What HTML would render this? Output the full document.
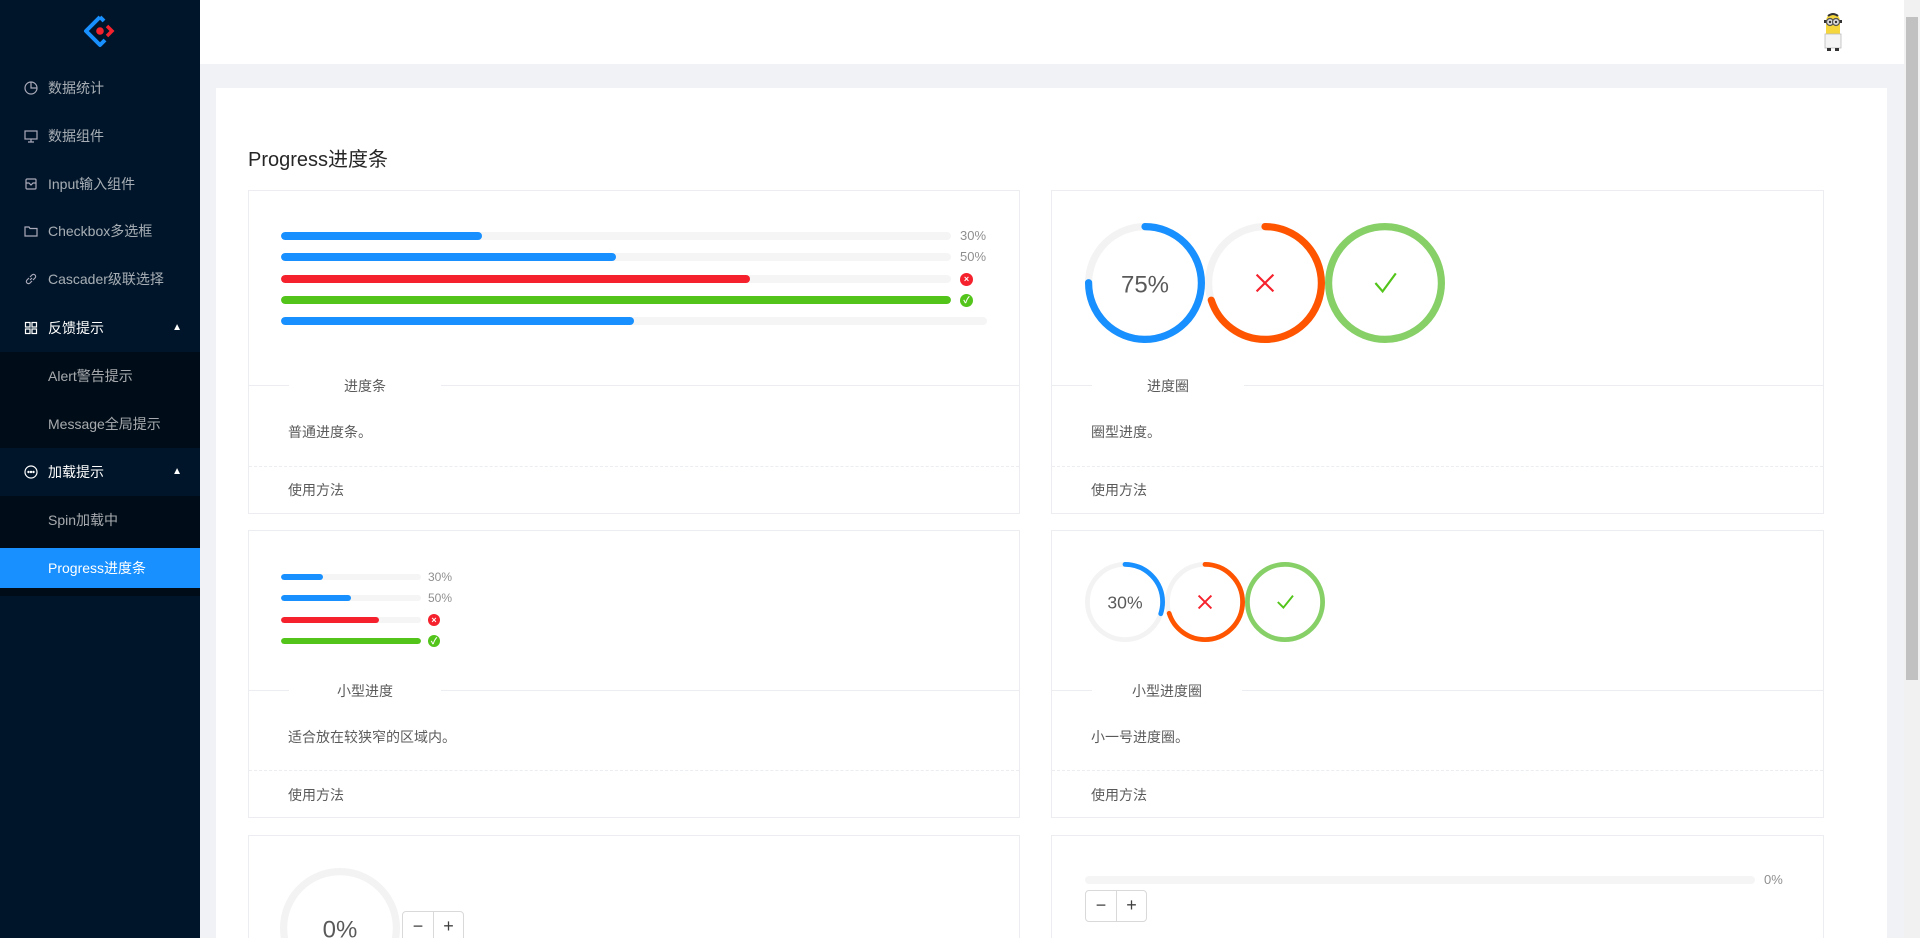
<!DOCTYPE html>
<html><head><meta charset="utf-8"><style>
*{margin:0;padding:0;box-sizing:border-box}
html{width:1920px;height:938px;overflow:hidden}
body{width:1920px;height:938px;overflow:hidden;background:#f0f2f5;font-family:"Liberation Sans","Noto Sans CJK SC",sans-serif;font-size:14px;color:rgba(0,0,0,.65);position:relative}
.side{position:absolute;left:0;top:0;width:200px;height:938px;background:#001529}
.mi{position:absolute;left:0;width:200px;height:48px;line-height:48px;color:rgba(255,255,255,.65);font-size:14px;padding-left:48px}
.mi svg{position:absolute;left:24px;top:17px}
.sub{background:#000c17}
.open{color:#fff}
.sel{background:#1890ff;color:#fff}
.arr{position:absolute;right:18px;top:0;font-size:10px;color:#fff}
.hdr{position:absolute;left:200px;top:0;width:1704px;height:64px;background:#fff}
.sb{position:absolute;right:0;top:0;width:16px;height:938px;background:#f1f1f1}
.sb div{position:absolute;left:2px;top:17px;width:12px;height:663px;background:#c1c1c1}
.panel{position:absolute;left:216px;top:88px;width:1671px;height:850px;background:#fff}
.title{position:absolute;left:248px;top:143px;font-size:20px;color:rgba(0,0,0,.85)}
.card{position:absolute;border:1px solid #ebedf0;background:#fff}
.div{position:absolute;left:0;right:0;height:1px;background:#ebedf0}
.dlab{position:absolute;background:#fff;padding:0 55px;font-size:14px;color:rgba(0,0,0,.65);line-height:20px;font-weight:normal}
.dash{position:absolute;left:0;right:0;border-top:1px dashed #ebedf0}
.desc{position:absolute;left:39px;font-size:14px;color:rgba(0,0,0,.65)}
.bar{position:absolute;height:8px;border-radius:100px;background:#f5f5f5;overflow:hidden}
.bar i{position:absolute;left:0;top:0;height:100%;border-radius:100px}
.pt{position:absolute;font-size:13px;color:rgba(0,0,0,.45);line-height:16px}
.ic{position:absolute;border-radius:50%;color:#fff;font-size:9px;text-align:center;font-weight:bold}
.btns{position:absolute;display:flex;border:1px solid #d9d9d9;border-radius:4px;background:#fff}
.btns span{width:30px;height:30px;line-height:28px;text-align:center;font-size:18px;color:rgba(0,0,0,.75)}
.btns span+span{border-left:1px solid #d9d9d9}
</style></head><body>
<div class="side">
 <svg style="position:absolute;left:82px;top:14px" width="36" height="36" viewBox="0 0 36 36"><path d="M18 3 L4 17 L18 31 L23 26" fill="none" stroke="#1890ff" stroke-width="4" stroke-linejoin="round"/><path d="M18 3 L22 7" stroke="#1890ff" stroke-width="4"/><path d="M25 12 L30 17 L25 22" fill="none" stroke="#f5222d" stroke-width="3.5"/><circle cx="18" cy="17" r="3.8" fill="#f5222d"/></svg>
 <div class="mi" style="top:64px"><svg width="14" height="14" viewBox="0 0 14 14" fill="none" stroke="#aab" stroke-width="1.2"><circle cx="7" cy="7" r="6"/><path d="M7 1v6h6"/></svg>数据统计</div>
 <div class="mi" style="top:112px"><svg width="14" height="14" viewBox="0 0 14 14" fill="none" stroke="#aab" stroke-width="1.2"><rect x="1" y="2" width="12" height="8"/><path d="M7 10v3M4 13h6"/></svg>数据组件</div>
 <div class="mi" style="top:160px"><svg width="14" height="14" viewBox="0 0 14 14" fill="none" stroke="#aab" stroke-width="1.2"><rect x="2" y="2" width="10" height="10" rx="1"/><path d="M2 6h3l2 2 2-2h3"/></svg>Input输入组件</div>
 <div class="mi" style="top:207px"><svg width="14" height="14" viewBox="0 0 14 14" fill="none" stroke="#aab" stroke-width="1.2"><path d="M1 3h4l1 1.5h7V12H1z"/></svg>Checkbox多选框</div>
 <div class="mi" style="top:255px"><svg width="14" height="14" viewBox="0 0 14 14" fill="none" stroke="#aab" stroke-width="1.2"><path d="M6 8 L8 6M5 6 L3 8a2 2 0 0 0 3 3l2-2M9 8l2-2a2 2 0 0 0-3-3L6 5"/></svg>Cascader级联选择</div>
 <div class="mi open" style="top:304px"><svg width="14" height="14" viewBox="0 0 14 14" fill="none" stroke="#fff" stroke-width="1.2"><rect x="1.5" y="1.5" width="4.5" height="4.5"/><rect x="8" y="1.5" width="4.5" height="4.5"/><rect x="1.5" y="8" width="4.5" height="4.5"/><rect x="8" y="8" width="4.5" height="4.5"/></svg>反馈提示<span class="arr">▲</span></div>
 <div class="sub" style="position:absolute;top:352px;left:0;width:200px;height:96px"></div>
 <div class="mi" style="top:352px">Alert警告提示</div>
 <div class="mi" style="top:400px">Message全局提示</div>
 <div class="mi open" style="top:448px"><svg width="14" height="14" viewBox="0 0 14 14" fill="none" stroke="#fff" stroke-width="1.2"><circle cx="7" cy="7" r="6"/><circle cx="4.5" cy="7" r=".6" fill="#fff"/><circle cx="7" cy="7" r=".6" fill="#fff"/><circle cx="9.5" cy="7" r=".6" fill="#fff"/></svg>加载提示<span class="arr">▲</span></div>
 <div class="sub" style="position:absolute;top:496px;left:0;width:200px;height:100px"></div>
 <div class="mi" style="top:496px">Spin加载中</div>
 <div class="mi sel" style="top:548px;height:40px;line-height:40px">Progress进度条</div>
</div>
<div class="hdr">
 <svg style="position:absolute;left:1620px;top:12px" width="26" height="42" viewBox="0 0 26 42"><path d="M6 10 Q6 2 13 2 Q20 2 20 10 V28 H6Z" fill="#f5d63d"/><rect x="4" y="8" width="18" height="3" fill="#333"/><circle cx="10" cy="10" r="3.5" fill="#ddd" stroke="#555" stroke-width="1.2"/><circle cx="16" cy="10" r="3.5" fill="#ddd" stroke="#555" stroke-width="1.2"/><circle cx="10" cy="10" r="1.2" fill="#333"/><circle cx="16" cy="10" r="1.2" fill="#333"/><path d="M8 4 Q13 0 18 4" stroke="#333" stroke-width="2" fill="none"/><rect x="5" y="22" width="16" height="14" fill="#f4f4f4" stroke="#bbb" stroke-width=".8"/><rect x="7" y="36" width="4" height="3" fill="#333"/><rect x="15" y="36" width="4" height="3" fill="#333"/></svg>
</div>
<div class="sb"><div></div></div>
<div class="panel"></div>
<div class="title">Progress进度条</div>

<div class="card" style="left:248px;top:190px;width:772px;height:324px">
 <div class="bar" style="left:32px;top:41px;width:670px"><i style="width:30%;background:#1890ff"></i></div><div class="pt" style="left:711px;top:37px">30%</div>
 <div class="bar" style="left:32px;top:62px;width:670px"><i style="width:50%;background:#1890ff"></i></div><div class="pt" style="left:711px;top:58px">50%</div>
 <div class="bar" style="left:32px;top:84px;width:670px"><i style="width:70%;background:#f5222d"></i></div><div class="ic" style="left:711px;top:82px;width:13px;height:13px;line-height:13px;background:#f5222d">×</div>
 <div class="bar" style="left:32px;top:105px;width:670px"><i style="width:100%;background:#52c41a"></i></div><div class="ic" style="left:711px;top:103px;width:13px;height:13px;line-height:13px;background:#52c41a">✓</div>
 <div class="bar" style="left:32px;top:126px;width:706px"><i style="width:50%;background:#1890ff"></i></div>
 <div class="div" style="top:194px"></div><div class="dlab" style="left:40px;top:185px">进度条</div>
 <div class="desc" style="top:231px">普通进度条。</div>
 <div class="dash" style="top:275px"></div>
 <div class="desc" style="top:289px">使用方法</div>
</div>
<div class="card" style="left:1051px;top:190px;width:773px;height:324px">
 <svg style="position:absolute;left:33px;top:32px" width="120" height="120" viewBox="0 0 100 100"><circle cx="50" cy="50" r="47" fill="none" stroke="#f3f3f3" stroke-width="6"/><circle cx="50" cy="50" r="47" fill="none" stroke="#1890ff" stroke-width="6" stroke-linecap="round" stroke-dasharray="221.5 295.3" transform="rotate(-90 50 50)"/><text x="50" y="58" text-anchor="middle" font-size="20" fill="rgba(0,0,0,.65)" font-family="Liberation Sans">75%</text></svg>
 <svg style="position:absolute;left:153px;top:32px" width="120" height="120" viewBox="0 0 100 100"><circle cx="50" cy="50" r="47" fill="none" stroke="#f3f3f3" stroke-width="6"/><circle cx="50" cy="50" r="47" fill="none" stroke="#ff5500" stroke-width="6" stroke-linecap="round" stroke-dasharray="206.7 295.3" transform="rotate(-90 50 50)"/><path d="M43 43L57 57M57 43L43 57" stroke="#f5222d" stroke-width="1.8"/></svg>
 <svg style="position:absolute;left:273px;top:32px" width="120" height="120" viewBox="0 0 100 100"><circle cx="50" cy="50" r="47" fill="none" stroke="#87d068" stroke-width="6"/><path d="M42 50L48 57L59 42" stroke="#52c41a" stroke-width="1.8" fill="none"/></svg>
 <div class="div" style="top:194px"></div><div class="dlab" style="left:40px;top:185px">进度圈</div>
 <div class="desc" style="top:231px">圈型进度。</div>
 <div class="dash" style="top:275px"></div>
 <div class="desc" style="top:289px">使用方法</div>
</div>
<div class="card" style="left:248px;top:530px;width:772px;height:288px">
 <div class="bar" style="left:32px;top:43px;width:140px;height:6px"><i style="width:30%;background:#1890ff"></i></div><div class="pt" style="left:179px;top:38px;font-size:12px">30%</div>
 <div class="bar" style="left:32px;top:64px;width:140px;height:6px"><i style="width:50%;background:#1890ff"></i></div><div class="pt" style="left:179px;top:59px;font-size:12px">50%</div>
 <div class="bar" style="left:32px;top:86px;width:140px;height:6px"><i style="width:70%;background:#f5222d"></i></div><div class="ic" style="left:179px;top:83px;width:12px;height:12px;line-height:12px;background:#f5222d">×</div>
 <div class="bar" style="left:32px;top:107px;width:140px;height:6px"><i style="width:100%;background:#52c41a"></i></div><div class="ic" style="left:179px;top:104px;width:12px;height:12px;line-height:12px;background:#52c41a">✓</div>
 <div class="div" style="top:159px"></div><div class="dlab" style="left:40px;top:150px;padding:0 48px">小型进度</div>
 <div class="desc" style="top:196px">适合放在较狭窄的区域内。</div>
 <div class="dash" style="top:239px"></div>
 <div class="desc" style="top:254px">使用方法</div>
</div>
<div class="card" style="left:1051px;top:530px;width:773px;height:288px">
 <svg style="position:absolute;left:33px;top:31px" width="80" height="80" viewBox="0 0 100 100"><circle cx="50" cy="50" r="47" fill="none" stroke="#f3f3f3" stroke-width="6"/><circle cx="50" cy="50" r="47" fill="none" stroke="#1890ff" stroke-width="6" stroke-linecap="round" stroke-dasharray="88.6 295.3" transform="rotate(-90 50 50)"/><text x="50" y="58" text-anchor="middle" font-size="22" fill="rgba(0,0,0,.65)" font-family="Liberation Sans">30%</text></svg>
 <svg style="position:absolute;left:113px;top:31px" width="80" height="80" viewBox="0 0 100 100"><circle cx="50" cy="50" r="47" fill="none" stroke="#f3f3f3" stroke-width="6"/><circle cx="50" cy="50" r="47" fill="none" stroke="#ff5500" stroke-width="6" stroke-linecap="round" stroke-dasharray="206.7 295.3" transform="rotate(-90 50 50)"/><path d="M42 42L58 58M58 42L42 58" stroke="#f5222d" stroke-width="2.4"/></svg>
 <svg style="position:absolute;left:193px;top:31px" width="80" height="80" viewBox="0 0 100 100"><circle cx="50" cy="50" r="47" fill="none" stroke="#87d068" stroke-width="6"/><path d="M41 50L48 57L60 42" stroke="#52c41a" stroke-width="2.4" fill="none"/></svg>
 <div class="div" style="top:159px"></div><div class="dlab" style="left:40px;top:150px;padding:0 40px">小型进度圈</div>
 <div class="desc" style="top:196px">小一号进度圈。</div>
 <div class="dash" style="top:239px"></div>
 <div class="desc" style="top:254px">使用方法</div>
</div>
<div class="card" style="left:248px;top:835px;width:772px;height:103px;overflow:hidden;border-bottom:none">
 <svg style="position:absolute;left:31px;top:32px" width="120" height="120" viewBox="0 0 100 100"><circle cx="50" cy="50" r="47" fill="none" stroke="#f3f3f3" stroke-width="6"/><text x="50" y="58" text-anchor="middle" font-size="20" fill="rgba(0,0,0,.65)" font-family="Liberation Sans">0%</text></svg>
 <div class="btns" style="left:153px;top:75px"><span>−</span><span>+</span></div>
</div>
<div class="card" style="left:1051px;top:835px;width:773px;height:103px;overflow:hidden;border-bottom:none">
 <div class="bar" style="left:33px;top:40px;width:670px"></div><div class="pt" style="left:712px;top:36px">0%</div>
 <div class="btns" style="left:33px;top:54px"><span>−</span><span>+</span></div>
</div>
</body></html>
